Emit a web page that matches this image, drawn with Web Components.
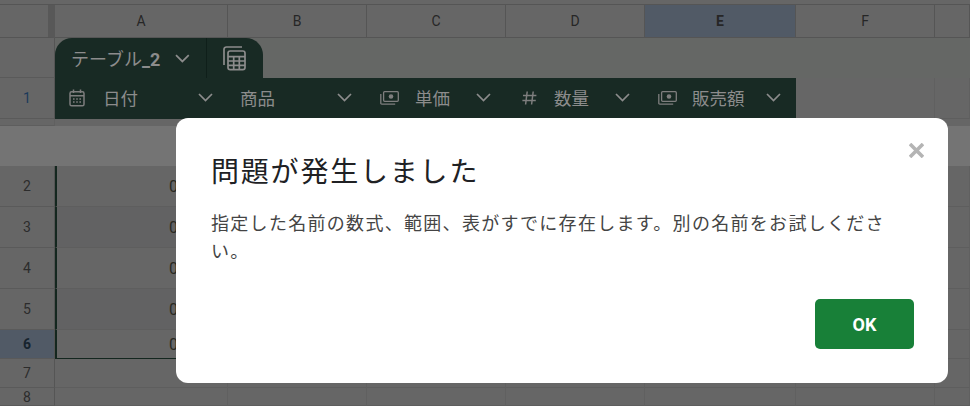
<!DOCTYPE html>
<html lang="ja">
<head>
<meta charset="utf-8">
<title>Sheet</title>
<style>
  html, body { margin: 0; height: 100%; overflow: hidden; background: #666; }
  body { font-family: Roboto, "Noto Sans CJK JP", sans-serif; }
</style>
</head>
<body>
<sheet-app>
  <alert-dialog heading="問題が発生しました" action="OK">指定した名前の数式、範囲、表がすでに存在します。別の名前をお試しください。</alert-dialog>
</sheet-app>

<script>
const ICONS = {
  calendar: `<svg viewBox="0 0 16 18" width="16" height="18" fill="none" stroke="currentColor" stroke-width="1.5">
      <rect x="1" y="2.8" width="14" height="14" rx="1.6"/><path d="M1 6.8h14M4.5 .6v3.4M11.5 .6v3.4"/>
      <path d="M4 10h1.6M7.2 10h1.6M10.4 10h1.6M4 13h1.6M7.2 13h1.6M10.4 13h1.6" stroke-width="1.3"/></svg>`,
  money: `<svg viewBox="0 0 19 14" width="19" height="14" fill="none" stroke="currentColor" stroke-width="1.3">
      <rect x="3.6" y=".7" width="14.7" height="9.6" rx="1"/><circle cx="11" cy="5.5" r="2.3" fill="currentColor" stroke="none"/>
      <path d="M.8 3v9.2a1 1 0 0 0 1 1h13.4"/></svg>`,
  hash: `<svg viewBox="0 0 15 14" width="15" height="14" fill="none" stroke="currentColor" stroke-width="1.5">
      <path d="M5.2 .5 3.6 13.5M11.2 .5 9.6 13.5M1 4.4h13.4M.4 9.6h13.4"/></svg>`,
  chevron: `<svg viewBox="0 0 15 9" width="15" height="9" fill="none" stroke="currentColor" stroke-width="1.7">
      <path d="M1 1l6.5 6.5L14 1"/></svg>`,
  tableCalc: `<svg viewBox="0 0 23 25" width="23" height="25" fill="none" stroke="currentColor" stroke-width="1.7">
      <path d="M1 19V3.4A2.4 2.4 0 0 1 3.4 1H19"/>
      <rect x="5" y="5" width="17" height="18.6" rx="2.2"/>
      <path d="M5 10.6h17M5 15h17M5 19.400h17M10.700 10.600v13M16.300 10.600v13"/></svg>`
};

class ColHeader extends HTMLElement {
  constructor() {
    super();
    this.attachShadow({mode: 'open'});
  }
  connectedCallback() {
    const on = this.hasAttribute('selected');
    this.shadowRoot.innerHTML = `
      <style>
        :host {
          display: flex; align-items: center; justify-content: center;
          box-sizing: border-box;
          border-right: 1px solid #555; border-bottom: 1px solid #555;
          font: ${on ? 700 : 400} 14px Roboto, sans-serif;
          color: #262626;
          background: ${on ? '#515a66' : '#666'};
        }
      </style>
      <slot></slot>`;
  }
}

class RowHeader extends HTMLElement {
  constructor() {
    super();
    this.attachShadow({mode: 'open'});
  }
  connectedCallback() {
    const on = this.hasAttribute('selected');
    const inTable = this.hasAttribute('table');
    this.shadowRoot.innerHTML = `
      <style>
        :host {
          display: flex; align-items: center; justify-content: center;
          box-sizing: border-box;
          border-right: 1px solid #555; border-bottom: 1px solid #5a5a5a;
          font: ${on ? 700 : 400} 14px Roboto, sans-serif;
          color: ${on ? '#16232e' : inTable ? '#1c3a5a' : '#2c2c2c'};
          background: ${on ? '#515a66' : '#666'};
        }
      </style>
      <slot></slot>`;
  }
}

class TableTab extends HTMLElement {
  constructor() {
    super();
    this.attachShadow({mode: 'open'});
  }
  connectedCallback() {
    this.shadowRoot.innerHTML = `
      <style>
        :host {
          display: flex; align-items: stretch;
          width: 208px; height: 100%;
          box-sizing: border-box;
          background: #182a24; color: #8c8c8c;
          border-radius: 17px 17px 0 0;
        }
        .name {
          display: flex; align-items: center;
          width: 152px; box-sizing: border-box;
          padding: 0 16px; gap: 15px;
          border-right: 1px solid #0f1f1a;
          font: 18px Roboto, "Noto Sans CJK JP", sans-serif;
          white-space: nowrap;
        }
        .name span { flex: 1; }
        b { font-weight: 700; }
        .calc { flex: 1; display: flex; align-items: center; padding-left: 16px; color: #8c8c8c; }
        svg { display: block; }
      </style>
      <div class="name"><span><slot></slot></span>${ICONS.chevron}</div>
      <div class="calc">${ICONS.tableCalc}</div>`;
  }
}

class HeadCell extends HTMLElement {
  constructor() {
    super();
    this.attachShadow({mode: 'open'});
  }
  connectedCallback() {
    const icon = ICONS[this.getAttribute('icon')] || '';
    const pad = this.getAttribute('pad') || 13;
    const iconBox = this.getAttribute('icon-box') || 35;
    this.shadowRoot.innerHTML = `
      <style>
        :host {
          display: flex; align-items: center;
          box-sizing: border-box;
          padding: 0 15px 2px ${pad}px;
          background: #182a24; color: #8c8c8c;
          font: 17.5px "Noto Sans CJK JP", sans-serif;
        }
        .icon { width: ${icon ? iconBox : 0}px; flex: none; display: flex; align-items: center; color: #7e7e7e; }
        .label { flex: 1; white-space: nowrap; }
        svg { display: block; }
      </style>
      <div class="icon">${icon}</div>
      <div class="label"><slot></slot></div>
      ${ICONS.chevron}`;
  }
}

class SheetCell extends HTMLElement {
  constructor() {
    super();
    this.attachShadow({mode: 'open'});
  }
  connectedCallback() {
    const bg = this.getAttribute('bg') || '#666';
    const border = this.hasAttribute('picked')
      ? 'border-left: 2px solid #14271f;' : '';
    const last = this.hasAttribute('last') ? 'border-bottom: 1px solid #14271f;' : 'border-bottom: 1px solid #5e5e5e;';
    this.shadowRoot.innerHTML = `
      <style>
        :host {
          display: flex; align-items: center;
          box-sizing: border-box;
          background: ${bg};
          border-right: 1px solid #606060;
          ${last}
          ${border}
          font: 16px Roboto, sans-serif;
          color: #2a2a22;
          padding-left: ${this.hasAttribute('picked') ? 112 : 0}px;
        }
      </style>
      <slot></slot>`;
  }
}

class SheetApp extends HTMLElement {
  constructor() {
    super();
    this.attachShadow({mode: 'open'});
  }
  connectedCallback() {
    const letters = ['A', 'B', 'C', 'D', 'E', 'F', ''];
    const heads = [
      ['calendar', 14, 34, '日付'],
      ['', 12, 0, '商品'],
      ['money', 13, 35, '単価'],
      ['hash', 16, 32, '数量'],
      ['money', 13, 34, '販売額']
    ];
    const body = [2, 3, 4, 5, 6, 7, 8, 9].map(n => {
      const picked = n <= 6;
      const cells = letters.map((_, i) => {
        if (i === 0 && picked) {
          return `<sheet-cell picked ${n === 6 ? 'last' : ''} bg="${n % 2 ? '#626263' : '#666'}">0</sheet-cell>`;
        }
        return `<sheet-cell></sheet-cell>`;
      }).join('');
      return `<row-header ${n === 6 ? 'selected' : ''}>${n}</row-header>${cells}`;
    }).join('');

    this.shadowRoot.innerHTML = `
      <style>
        :host {
          display: block; position: relative;
          width: 970px; height: 406px; overflow: hidden;
          background: #666;
        }
        .grid {
          display: grid;
          grid-template-columns: 55px 173px 139px 139px 139px 151px 139px 1fr;
          grid-template-rows: 5px 33px 40px 41px 7px 40px 41px 41px 41px 41px 29px 29px 18px;
          height: 406px;
        }
        .top { grid-column: 1 / -1; border-bottom: 1px solid #555; }
        .corner { background: #666; border-bottom: 1px solid #555; border-right: 7px solid #585858; }
        .tab-head { border-right: 1px solid #555; border-bottom: 1px solid #5a5a5a; }
        .tab-row { grid-column: 2 / -1; background: #656765; }
        .bar { grid-column: 1 / -1; background: #747474; }
        .rest { border-right: 1px solid #606060; border-bottom: 1px solid #5e5e5e; }
      </style>
      <div class="grid">
        <div class="top"></div>
        <div class="corner"></div>
        ${letters.map((c, i) => `<col-header ${c === 'E' ? 'selected' : ''}>${c}</col-header>`).join('')}
        <div class="tab-head"></div>
        <div class="tab-row"><table-tab>テーブル<b>_2</b></table-tab></div>
        <row-header table>1</row-header>
        ${heads.map(([icon, pad, box, label]) => `<head-cell icon="${icon}" pad="${pad}" icon-box="${box}">${label}</head-cell>`).join('')}
        <div class="rest"></div>
        <div class="rest"></div>
        <div class="rest"></div>
        <div class="bar"></div>
        ${body}
      </div>
      <slot></slot>`;
  }
}

class AlertDialog extends HTMLElement {
  constructor() {
    super();
    this.attachShadow({mode: 'open'});
  }
  connectedCallback() {
    this.shadowRoot.innerHTML = `
      <style>
        :host {
          position: absolute; left: 176px; top: 118px;
          width: 772px; height: 265px;
          box-sizing: border-box;
          display: flex; flex-direction: column;
          padding: 33px 34px 34px 35px;
          background: #fff;
          border-radius: 12px;
          font-family: "Noto Sans CJK JP", sans-serif;
        }
        h2 {
          margin: 0; font-size: 28px; font-weight: 400; line-height: 38px;
          letter-spacing: 1.8px; color: #202124;
        }
        p {
          margin: 19px 0 0; font-size: 18px; line-height: 28px;
          letter-spacing: 1.3px; color: #444;
          width: 690px;
        }
        .close {
          position: absolute; right: 24px; top: 25px;
          color: #b4b4b4; display: block;
        }
        footer { margin-top: auto; display: flex; justify-content: flex-end; }
        button {
          width: 99px; height: 50px; border: 0; border-radius: 5px;
          background: #188038; color: #fff;
          font: 700 18px Roboto, sans-serif;
        }
      </style>
      <svg class="close" width="15" height="15" viewBox="0 0 15 15" fill="none" stroke="currentColor" stroke-width="3.6"><path d="M1 1l13 13M14 1L1 14"/></svg>
      <h2>${this.getAttribute('heading')}</h2>
      <p><slot></slot></p>
      <footer><button type="button">${this.getAttribute('action')}</button></footer>`;
  }
}

customElements.define('col-header', ColHeader);
customElements.define('row-header', RowHeader);
customElements.define('table-tab', TableTab);
customElements.define('head-cell', HeadCell);
customElements.define('sheet-cell', SheetCell);
customElements.define('alert-dialog', AlertDialog);
customElements.define('sheet-app', SheetApp);
</script>
</body>
</html>
